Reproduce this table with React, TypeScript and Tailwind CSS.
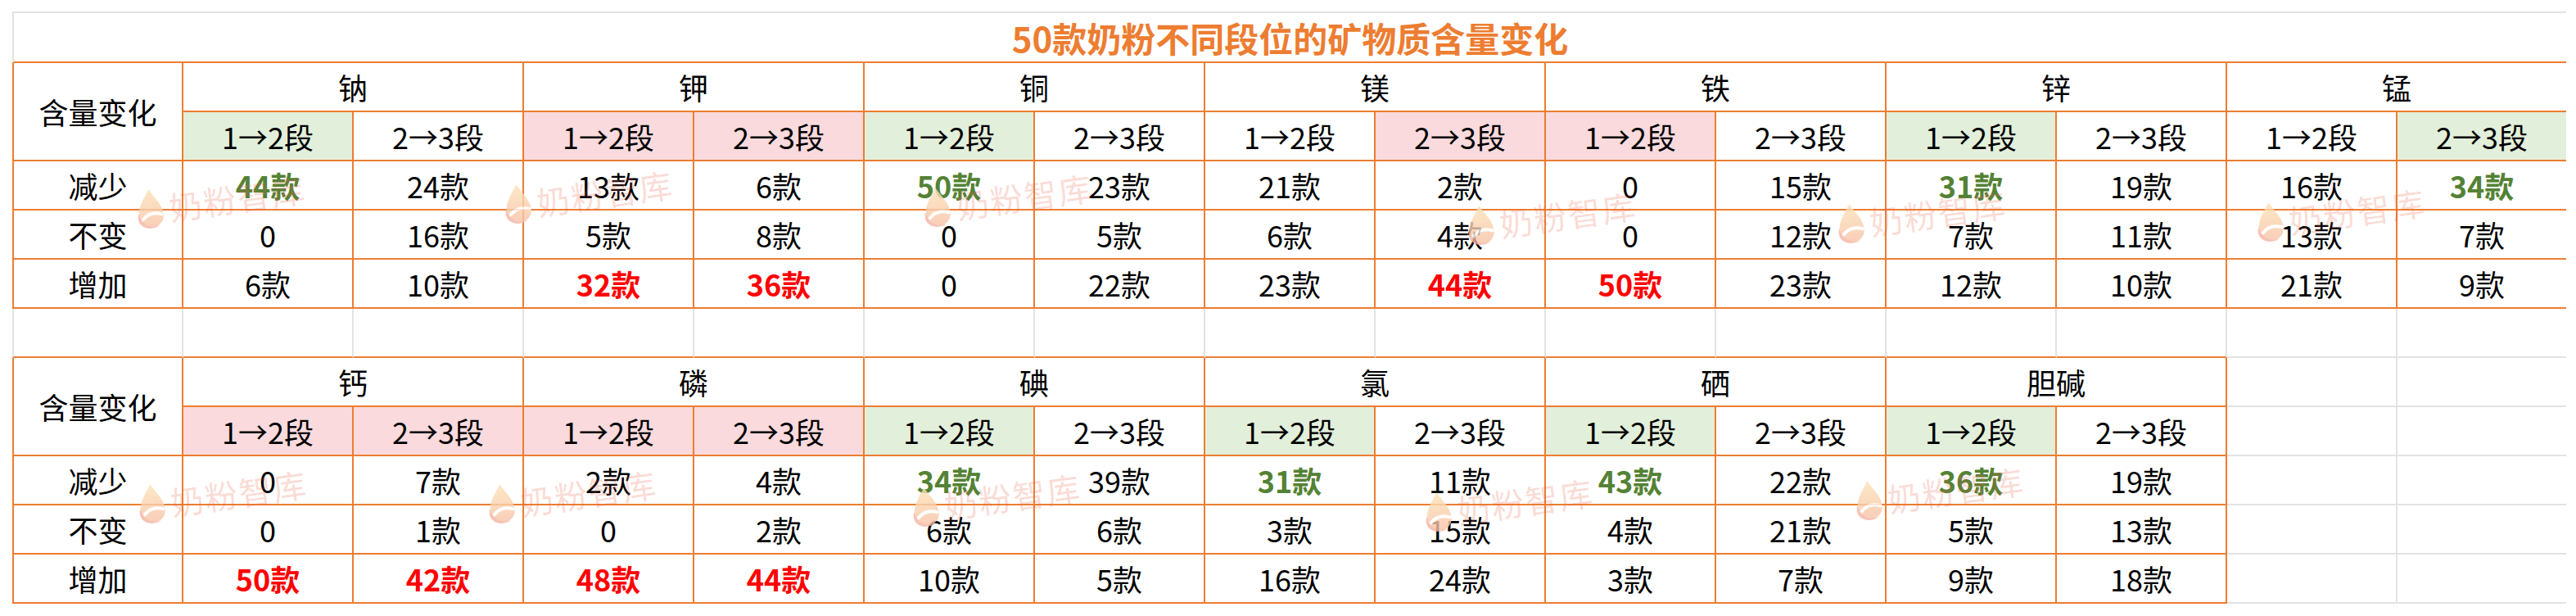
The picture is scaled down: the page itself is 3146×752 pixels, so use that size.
import React from "react";

type Tone = "g" | "r" | undefined;
type Val = [string, Tone?];
type Fill = "green" | "pink" | "";
type Elem = { name: string; fill: [Fill, Fill]; a: Val[]; b: Val[] };

const table1: Elem[] = [
  { name: "钠", fill: ["green", ""], a: [["44款", "g"], ["0"], ["6款"]], b: [["24款"], ["16款"], ["10款"]] },
  { name: "钾", fill: ["pink", "pink"], a: [["13款"], ["5款"], ["32款", "r"]], b: [["6款"], ["8款"], ["36款", "r"]] },
  { name: "铜", fill: ["green", ""], a: [["50款", "g"], ["0"], ["0"]], b: [["23款"], ["5款"], ["22款"]] },
  { name: "镁", fill: ["", "pink"], a: [["21款"], ["6款"], ["23款"]], b: [["2款"], ["4款"], ["44款", "r"]] },
  { name: "铁", fill: ["pink", ""], a: [["0"], ["0"], ["50款", "r"]], b: [["15款"], ["12款"], ["23款"]] },
  { name: "锌", fill: ["green", ""], a: [["31款", "g"], ["7款"], ["12款"]], b: [["19款"], ["11款"], ["10款"]] },
  { name: "锰", fill: ["", "green"], a: [["16款"], ["13款"], ["21款"]], b: [["34款", "g"], ["7款"], ["9款"]] },
];

const table2: Elem[] = [
  { name: "钙", fill: ["pink", "pink"], a: [["0"], ["0"], ["50款", "r"]], b: [["7款"], ["1款"], ["42款", "r"]] },
  { name: "磷", fill: ["pink", "pink"], a: [["2款"], ["0"], ["48款", "r"]], b: [["4款"], ["2款"], ["44款", "r"]] },
  { name: "碘", fill: ["green", ""], a: [["34款", "g"], ["6款"], ["10款"]], b: [["39款"], ["6款"], ["5款"]] },
  { name: "氯", fill: ["green", ""], a: [["31款", "g"], ["3款"], ["16款"]], b: [["11款"], ["15款"], ["24款"]] },
  { name: "硒", fill: ["green", ""], a: [["43款", "g"], ["4款"], ["3款"]], b: [["22款"], ["21款"], ["7款"]] },
  { name: "胆碱", fill: ["green", ""], a: [["36款", "g"], ["5款"], ["9款"]], b: [["19款"], ["13款"], ["18款"]] },
];

const rowLabels = ["减少", "不变", "增加"];

// watermark spots, page pixels (left of logo, top of block)
const marks = [
  { x: 163, y: 232 },
  { x: 612, y: 226 },
  { x: 1124, y: 230 },
  { x: 1788, y: 252 },
  { x: 2240, y: 250 },
  { x: 2752, y: 248 },
  { x: 165, y: 592 },
  { x: 592, y: 592 },
  { x: 1110, y: 596 },
  { x: 1736, y: 602 },
  { x: 2262, y: 588 },
];

const cellO = "flex items-center justify-center border-b-2 border-r-2 border-[#ED7D31]";
const cellOFirst = "flex items-center justify-center border-b-2 border-l-2 border-r-2 border-[#ED7D31]";
const cellOLast = "flex items-center justify-center border-b-2 border-[#ED7D31]";
const cellGray = "border-b-2 border-r-2 border-[#e3e3e3]";
const cellGrayLast = "border-b-2 border-[#e3e3e3]";

function fillClass(f: Fill) {
  if (f === "green") return "bg-[#E2EFDA]";
  if (f === "pink") return "bg-[#FADADD]";
  return "bg-white";
}

function toneClass(t: Tone) {
  if (t === "g") return "font-bold text-[#548235]";
  if (t === "r") return "font-bold text-[#FF0000]";
  return "text-black";
}

function Mark({ x, y }: { x: number; y: number }) {
  return (
    <div
      className="pointer-events-none absolute flex origin-left -rotate-[8deg] items-center gap-[6px]"
      style={{ left: x, top: y }}
    >
      <svg width="38" height="54" viewBox="0 0 38 54" className="opacity-80">
        <defs>
          <linearGradient id="drop" x1="0" y1="0" x2="0" y2="1">
            <stop offset="0" stopColor="#fde3b6" />
            <stop offset="1" stopColor="#f8c2a8" />
          </linearGradient>
        </defs>
        <path d="M22 2 C 14 14, 6 22, 6 34 a15 15 0 0 0 30 0 C 36 22, 28 14, 22 2 Z" fill="url(#drop)" />
        <path d="M10 38 Q 20 28 34 34" stroke="#ffffff" strokeWidth="4" fill="none" strokeLinecap="round" />
        <path d="M6 30 C 0 44, 14 54, 30 48 C 18 50, 8 44, 6 30 Z" fill="#f6b4a4" />
      </svg>
      <span className="text-[40px] leading-none tracking-[2px] text-[rgba(236,96,72,0.24)]">奶粉智库</span>
    </div>
  );
}

function TableRows({ data, extra }: { data: Elem[]; extra: number }) {
  const cells: React.ReactNode[] = [];
  const total = data.length * 2;

  cells.push(
    <div key="label" className={`${cellOFirst} row-span-2`}>
      含量变化
    </div>
  );
  data.forEach((e, i) => {
    const last = extra === 0 && i === data.length - 1;
    cells.push(
      <div key={`h${i}`} className={`${last ? cellOLast : cellO} col-span-2`}>
        {e.name}
      </div>
    );
  });
  for (let k = 0; k < extra; k++) {
    cells.push(<div key={`hx${k}`} className={k === extra - 1 ? cellGrayLast : cellGray} />);
  }

  data.forEach((e, i) => {
    ["1→2段", "2→3段"].forEach((t, j) => {
      const last = extra === 0 && i * 2 + j === total - 1;
      cells.push(
        <div key={`s${i}${j}`} className={`${last ? cellOLast : cellO} ${fillClass(e.fill[j])}`}>
          {t}
        </div>
      );
    });
  });
  for (let k = 0; k < extra; k++) {
    cells.push(<div key={`sx${k}`} className={k === extra - 1 ? cellGrayLast : cellGray} />);
  }

  rowLabels.forEach((label, r) => {
    cells.push(
      <div key={`l${r}`} className={cellOFirst}>
        {label}
      </div>
    );
    data.forEach((e, i) => {
      [e.a[r], e.b[r]].forEach((v, j) => {
        const last = extra === 0 && i * 2 + j === total - 1;
        cells.push(
          <div key={`d${r}${i}${j}`} className={`${last ? cellOLast : cellO} ${toneClass(v[1])}`}>
            {v[0]}
          </div>
        );
      });
    });
    for (let k = 0; k < extra; k++) {
      cells.push(<div key={`dx${r}${k}`} className={k === extra - 1 ? cellGrayLast : cellGray} />);
    }
  });

  return <>{cells}</>;
}

export default function App() {
  return (
    <div className="h-[752px] w-[3146px] overflow-hidden bg-white pl-[15px] pt-[14px] font-['Noto_Sans_CJK_SC','Noto_Sans',sans-serif] text-[36px] leading-none text-black">
      <div className="relative w-fit">
        <div className="grid grid-cols-[209px_repeat(13,208px)_206px] grid-rows-[63px_repeat(11,60px)]">
          <div className="col-span-15 flex items-center justify-center border-b-2 border-l-2 border-t-2 border-b-[#ED7D31] border-l-[#e3e3e3] border-t-[#e3e3e3] text-[42px] font-bold text-[#ED7D31]">
            50款奶粉不同段位的矿物质含量变化
          </div>

          <TableRows data={table1} extra={0} />

          {Array.from({ length: 15 }).map((_, i) => (
            <div
              key={`gap${i}`}
              className={
                i === 0
                  ? "border-b-2 border-l-2 border-r-2 border-b-[#ED7D31] border-l-[#e3e3e3] border-r-[#e3e3e3]"
                  : i < 13
                    ? "border-b-2 border-r-2 border-b-[#ED7D31] border-r-[#e3e3e3]"
                    : i === 13
                      ? "border-b-2 border-r-2 border-[#e3e3e3]"
                      : "border-b-2 border-[#e3e3e3]"
              }
            />
          ))}

          <TableRows data={table2} extra={2} />
        </div>

        {marks.map((m, i) => (
          <Mark key={i} x={m.x - 15} y={m.y - 14} />
        ))}
      </div>
    </div>
  );
}
